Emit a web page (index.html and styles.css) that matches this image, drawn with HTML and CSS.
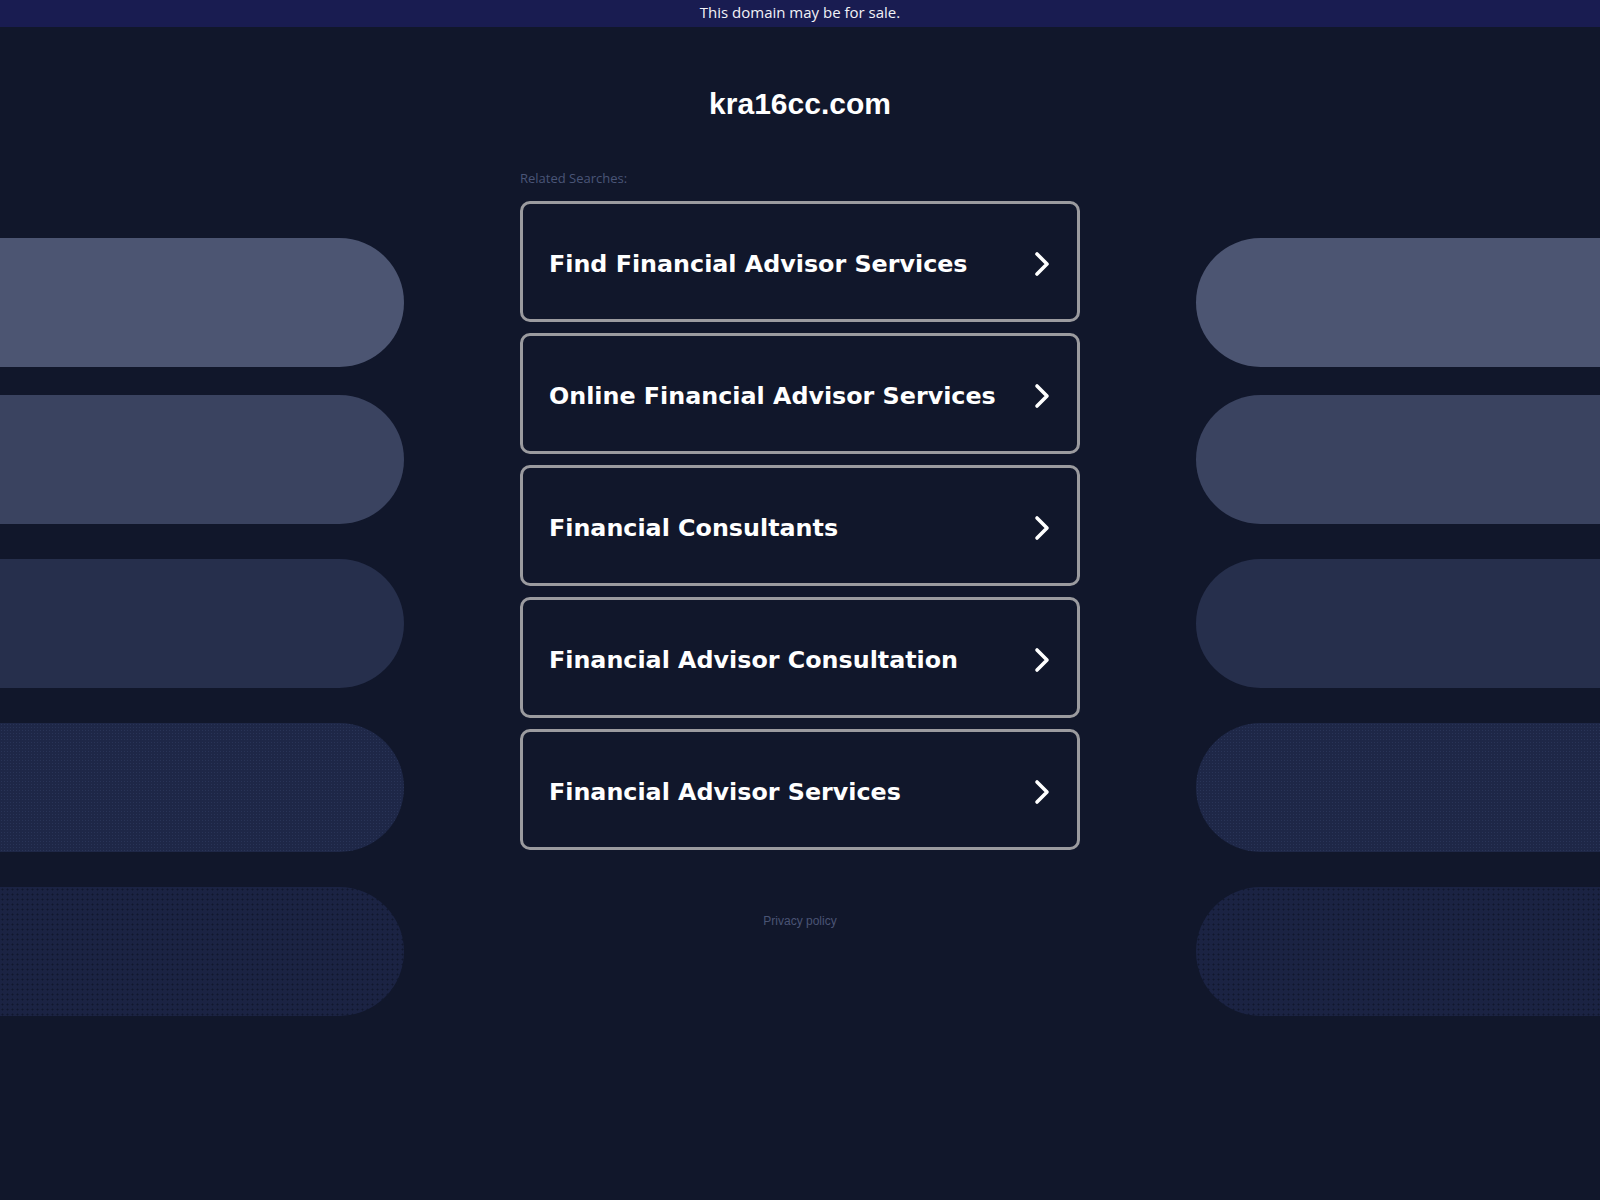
FILE: index.html
```html
<!DOCTYPE html>
<html lang="en">
<head>
<meta charset="utf-8">
<title>kra16cc.com</title>
<link rel="stylesheet" href="styles.css">
</head>
<body>
<div class="topbar">This domain may be for sale.</div>
<div class="layout">
  <div class="side side-left">
    <div class="pill p1"></div>
    <div class="pill p2"></div>
    <div class="pill p3"></div>
    <div class="pill p4"></div>
    <div class="pill p5"></div>
  </div>
  <main class="center">
    <h1 class="domain">kra16cc.com</h1>
    <div class="related">Related Searches:</div>
    <div class="cards">
      <a class="card" href="#"><span class="card-text">Find Financial Advisor Services</span><svg class="chev" viewBox="0 0 16 26" width="16" height="26"><path d="M3 3 L13 13 L3 23" fill="none" stroke="#fff" stroke-width="3.6" stroke-linecap="round" stroke-linejoin="round"/></svg></a>
      <a class="card" href="#"><span class="card-text">Online Financial Advisor Services</span><svg class="chev" viewBox="0 0 16 26" width="16" height="26"><path d="M3 3 L13 13 L3 23" fill="none" stroke="#fff" stroke-width="3.6" stroke-linecap="round" stroke-linejoin="round"/></svg></a>
      <a class="card" href="#"><span class="card-text">Financial Consultants</span><svg class="chev" viewBox="0 0 16 26" width="16" height="26"><path d="M3 3 L13 13 L3 23" fill="none" stroke="#fff" stroke-width="3.6" stroke-linecap="round" stroke-linejoin="round"/></svg></a>
      <a class="card" href="#"><span class="card-text">Financial Advisor Consultation</span><svg class="chev" viewBox="0 0 16 26" width="16" height="26"><path d="M3 3 L13 13 L3 23" fill="none" stroke="#fff" stroke-width="3.6" stroke-linecap="round" stroke-linejoin="round"/></svg></a>
      <a class="card" href="#"><span class="card-text">Financial Advisor Services</span><svg class="chev" viewBox="0 0 16 26" width="16" height="26"><path d="M3 3 L13 13 L3 23" fill="none" stroke="#fff" stroke-width="3.6" stroke-linecap="round" stroke-linejoin="round"/></svg></a>
    </div>
    <a class="privacy" href="#">Privacy policy</a>
  </main>
  <div class="side side-right">
    <div class="pill p1"></div>
    <div class="pill p2"></div>
    <div class="pill p3"></div>
    <div class="pill p4"></div>
    <div class="pill p5"></div>
  </div>
</div>
</body>
</html>
```
FILE: styles.css
```css
html, body {
  margin: 0;
  padding: 0;
}
body {
  background: #11172b;
  width: 1600px;
  min-height: 1200px;
  font-family: "Liberation Sans", Arial, sans-serif;
}
.topbar {
  height: 27px;
  background: #191c51;
  color: #f2f2f7;
  font-family: "Open Sans", sans-serif;
  font-weight: 500;
  font-size: 15px;
  line-height: 25px;
  text-align: center;
}
.layout {
  display: grid;
  grid-template-columns: 404px 792px 404px;
}
.side {
  display: flex;
  flex-direction: column;
  padding-top: 211px;
}
.pill {
  height: 129px;
  margin-bottom: 35px;
}
.pill.p1 { margin-bottom: 28px; background: #4c5572; }
.pill.p2 { background: #3a4360; }
.pill.p3 { background: #262f4c; }
.pill.p4 {
  background-color: #1e2747;
  background-image: radial-gradient(circle, rgba(50,62,100,0.55) 0.6px, transparent 1px);
  background-size: 3px 3px;
}
.pill.p5 {
  background-color: #1b2343;
  background-image: radial-gradient(circle, rgba(14,20,40,0.8) 0.8px, transparent 1.2px);
  background-size: 5px 5px;
}
.side-left .pill { border-radius: 0 65px 65px 0; }
.side-right .pill { border-radius: 65px 0 0 65px; }

.center {
  display: flex;
  flex-direction: column;
  align-items: center;
}
.domain {
  margin: 59px 0 0;
  height: 36px;
  line-height: 36px;
  font-size: 30px;
  font-weight: bold;
  color: #ffffff;
  font-family: "Liberation Sans", Arial, sans-serif;
}
.related {
  width: 560px;
  margin-top: 47px;
  font-family: "Open Sans", sans-serif;
  font-size: 13px;
  line-height: 18px;
  color: #4a5577;
  font-weight: 500;
}
.cards {
  width: 560px;
  margin-top: 14px;
  display: flex;
  flex-direction: column;
  gap: 11px;
}
.card {
  box-sizing: border-box;
  height: 121px;
  border: 3px solid #9b9b9f;
  border-radius: 10px;
  display: flex;
  align-items: center;
  justify-content: space-between;
  padding: 4px 27px 0 26px;
  text-decoration: none;
  color: #ffffff;
}
.card-text {
  font-family: "DejaVu Sans", Verdana, sans-serif;
  font-weight: bold;
  font-size: 23.8px;
  color: #ffffff;
}
.chev {
  display: block;
}
.privacy {
  margin-top: 64px;
  font-family: "Liberation Sans", Arial, sans-serif;
  font-size: 12px;
  color: #4a5474;
  text-decoration: none;
}
```
